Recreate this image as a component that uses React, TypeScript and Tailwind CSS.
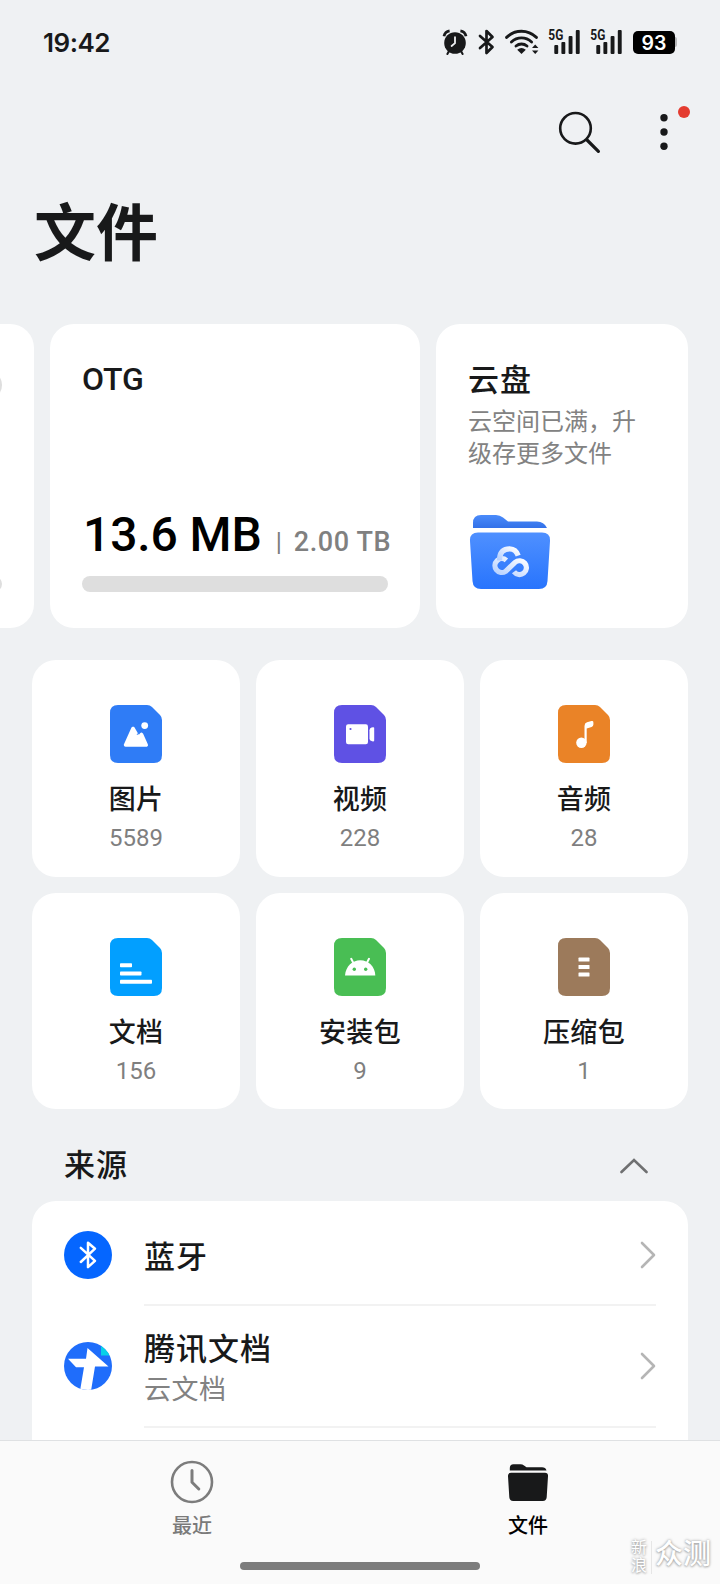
import React from 'react'
import { clsx } from 'clsx'

const FilePage = ({ color, children }: { color: string; children: React.ReactNode }) => (
  <svg width="52" height="58" viewBox="0 0 52 58" className="block">
    <path d="M8 0H37Q40 0 42 2L50 10Q52 12 52 15V50Q52 58 44 58H8Q0 58 0 50V8Q0 0 8 0Z" fill={color} />
    {children}
  </svg>
)

const categories = [
  {
    name: '图片',
    count: '5589',
    icon: (
      <FilePage color="#2f7cf6">
        <path d="M15.6 40L23 23.5L28.5 33L31.5 29.5L36.2 40Z" fill="#fff" stroke="#fff" strokeWidth="3.6" strokeLinejoin="round" />
        <path d="M27 30L28.8 27.3" stroke="#2f7cf6" strokeWidth="0.8" />
        <circle cx="34.7" cy="20.6" r="3.4" fill="#fff" />
      </FilePage>
    ),
  },
  {
    name: '视频',
    count: '228',
    icon: (
      <FilePage color="#5f51e4">
        <rect x="12" y="19.3" width="22" height="20" rx="2.2" fill="#fff" />
        <path d="M35.5 25.2Q35.5 23.2 37.5 22.6L39 22.2Q40.2 22 40.2 23V35.6Q40.2 36.6 39 36.4L37.5 36Q35.5 35.4 35.5 33.4Z" fill="#fff" />
        <circle cx="16.5" cy="24" r="1.1" fill="#5f51e4" />
      </FilePage>
    ),
  },
  {
    name: '音频',
    count: '28',
    icon: (
      <FilePage color="#ea8327">
        <circle cx="23.4" cy="37.8" r="5.2" fill="#fff" />
        <path d="M26.5 38V21Q26.5 18 29 17.2L33.5 16Q35.4 15.6 35.4 17.4V19.6Q35.4 21.4 33.6 22L28.7 23.6V38Z" fill="#fff" />
      </FilePage>
    ),
  },
  {
    name: '文档',
    count: '156',
    icon: (
      <FilePage color="#029fff">
        <rect x="10" y="25.3" width="12" height="4" rx="0.8" fill="#fff" />
        <rect x="10" y="33.5" width="21.5" height="4" rx="0.8" fill="#fff" />
        <rect x="10" y="41.7" width="32" height="4" rx="0.8" fill="#fff" />
      </FilePage>
    ),
  },
  {
    name: '安装包',
    count: '9',
    icon: (
      <FilePage color="#49be54">
        <path d="M11 37.5C11.6 28.6 18 22.2 26.3 22.2S41 28.6 41.3 37.5Z" fill="#fff" />
        <path d="M17.2 20.8L19.6 25.4M35 20.8L32.6 25.4" stroke="#fff" strokeWidth="2" strokeLinecap="round" />
        <circle cx="20.3" cy="31.2" r="1.7" fill="#49be54" />
        <circle cx="31.7" cy="31.2" r="1.7" fill="#49be54" />
      </FilePage>
    ),
  },
  {
    name: '压缩包',
    count: '1',
    icon: (
      <FilePage color="#9c7a5b">
        <rect x="20.5" y="19.6" width="11" height="4" rx="0.6" fill="#fff" />
        <rect x="20.5" y="27" width="11" height="4" rx="0.6" fill="#fff" />
        <rect x="20.5" y="34.5" width="11" height="4" rx="0.6" fill="#fff" />
      </FilePage>
    ),
  },
]

const Signal = () => (
  <svg width="33" height="34" viewBox="0 -4 33 34" className="block">
    <text x="0.3" y="11.4" fontSize="14" fontWeight="700" fontFamily="Roboto, sans-serif" textLength="15" lengthAdjust="spacingAndGlyphs" fill="#18191a">
      5G
    </text>
    <g fill="#18191a">
      <rect x="6.3" y="16" width="3.9" height="9" rx="1" />
      <rect x="13.4" y="13" width="3.9" height="12" rx="1" />
      <rect x="20.6" y="7" width="3.9" height="18" rx="1" />
      <rect x="27.8" y="1" width="3.9" height="24" rx="1" />
    </g>
  </svg>
)

const StatusBar = () => (
  <div className="flex h-[84px] items-center justify-between pl-[43px] pr-[43px]">
    <span className="pt-[2px] font-[Inter,sans-serif] text-[26px] font-semibold leading-none tracking-[-0.5px] text-[#18191a]">19:42</span>
    <div className="flex items-center">
      {/* Alarm */}
      <svg width="26" height="26" viewBox="0 0 26 26" className="mr-[10px] block">
        <circle cx="13" cy="14" r="10.8" fill="#18191a" />
        <path d="M2 7.2Q3 2.6 7.6 1.9M24 7.2Q23 2.6 18.4 1.9" stroke="#18191a" strokeWidth="2.8" fill="none" />
        <path d="M7 22L5.4 25M19 22L20.6 25" stroke="#18191a" strokeWidth="2" strokeLinecap="round" />
        <path d="M13 8.2V14.2L9.6 17" stroke="#eff1f3" strokeWidth="1.8" fill="none" strokeLinecap="round" />
      </svg>
      {/* Bluetooth */}
      <svg width="17" height="26" viewBox="0 0 17 26" className="mr-[10px] block">
        <path d="M2 7L14.5 18L8.5 24V2L14.5 8L2 19" stroke="#18191a" strokeWidth="2.7" fill="none" strokeLinejoin="round" strokeLinecap="round" />
      </svg>
      {/* Wi-Fi */}
      <svg width="34" height="26" viewBox="0 0 34 26" className="mr-[9px] block">
        <g fill="none" stroke="#18191a" strokeWidth="2.9" strokeLinecap="round">
          <path d="M1.6 8.4Q8 2.3 16.5 2.3T31.4 8.4" />
          <path d="M6.4 13Q10.8 8.9 16.5 8.9T26.6 13" />
          <path d="M11 17Q13.4 15 16.5 15T22 17" />
        </g>
        <path d="M12.2 20.8Q16.5 17.4 20.8 20.8L16.5 25Z" fill="#18191a" />
        <path d="M27 19L30.2 15.6L33.4 19ZM27 21.6L30.2 25L33.4 21.6Z" fill="#18191a" />
      </svg>
      <Signal />
      <div className="w-[9px]" />
      <Signal />
      <div className="ml-[10px] flex h-[23px] w-[42px] items-center justify-center rounded-[5px] bg-black pt-[2px] font-[Inter,sans-serif] text-[19.5px] font-semibold leading-[20px] text-white">
        93
      </div>
      <div className="h-[10px] w-[2px] rounded-r-full bg-[#b5b6b8]" />
    </div>
  </div>
)

const Toolbar = () => (
  <div className="flex h-[104px] justify-end pr-[29px] pt-[20px]">
    <svg width="44" height="44" viewBox="0 0 44 44" className="mr-[56px] mt-[6px] block">
      <circle cx="18.5" cy="18.3" r="15.3" fill="none" stroke="#18191a" strokeWidth="2.6" />
      <path d="M30 30L41.4 41.4" stroke="#18191a" strokeWidth="3.2" strokeLinecap="round" />
    </svg>
    <svg width="34" height="50" viewBox="0 0 34 50" className="block">
      <circle cx="7" cy="13.7" r="3.7" fill="#18191a" />
      <circle cx="7" cy="28" r="3.7" fill="#18191a" />
      <circle cx="7" cy="42.3" r="3.7" fill="#18191a" />
      <circle cx="27" cy="8" r="6" fill="#e43c30" />
    </svg>
  </div>
)

const CloudFolder = () => (
  <svg width="82" height="76" viewBox="0 0 82 76" className="block">
    <defs>
      <linearGradient id="tab" x1="0" y1="0" x2="0" y2="1">
        <stop offset="0" stopColor="#4a8bfb" />
        <stop offset="1" stopColor="#3371e8" />
      </linearGradient>
      <linearGradient id="body" x1="0" y1="0" x2="0" y2="1">
        <stop offset="0" stopColor="#4f90ff" />
        <stop offset="1" stopColor="#2874fd" />
      </linearGradient>
      <linearGradient id="mark" x1="1" y1="0" x2="0" y2="1">
        <stop offset="0" stopColor="#fff" />
        <stop offset="1" stopColor="#b4cfff" />
      </linearGradient>
    </defs>
    <path d="M4 14V9Q4 1 12 1H27Q31 1 34 3.5L39 7.5H68Q75 7.5 78 14Z" fill="url(#tab)" />
    <path d="M9 18.5H73Q81.5 18.5 81 27L78.5 67Q78 75 70 75H12Q4 75 3.5 67L1 27Q0.5 18.5 9 18.5Z" fill="url(#body)" />
    <g fill="none" stroke="url(#mark)" strokeWidth="5.2">
      <path d="M37.4 46.4A6.9 6.9 0 1 0 36.6 57.4L46 48.4A6.9 6.9 0 1 1 45 57.8" />
      <path d="M30.6 46.5V44Q31.4 35 40.6 34.8Q47 35 49.2 41.6" />
    </g>
  </svg>
)

const StorageCards = () => (
  <div className="flex h-[304px] gap-4 overflow-hidden">
    <div className="relative w-[34px] shrink-0 overflow-hidden rounded-r-[24px] bg-white">
      <div className="absolute left-[-28px] top-[46px] size-[30px] rounded-full bg-[#dedede]" />
      <div className="absolute left-[-28px] top-[252px] h-4 w-[30px] rounded-full bg-[#dedede]" />
    </div>
    <div className="flex w-[370px] shrink-0 flex-col rounded-[24px] bg-white px-8 pt-[36px] font-[Roboto,sans-serif]">
      <div className="text-[32px] font-medium leading-[38px] tracking-[-0.2px] text-[#18191a]">OTG</div>
      <div className="mt-[109px] flex h-[56px] items-baseline whitespace-nowrap leading-[56px]">
        <span className="pl-px text-[48px] font-medium tracking-[-0.1px] text-black">13.6 MB</span>
        <span className="ml-[14px] text-[25px] text-[#7b7b7b]">|</span>
        <span className="ml-[12px] text-[27px] font-medium tracking-[0.6px] text-[#808080]">2.00 TB</span>
      </div>
      <div className="mt-[13px] h-4 w-[306px] shrink-0 rounded-full bg-[#dedede]" />
    </div>
    <div className="w-[252px] shrink-0 rounded-[24px] bg-white px-8 pt-[35px]">
      <div className="text-[31px] font-medium leading-[38px] tracking-[1px] text-[#18191a]">云盘</div>
      <div className="mt-[7px] whitespace-nowrap text-[24px] font-normal leading-[32px] text-[#828282]">
        云空间已满，升
        <br />
        级存更多文件
      </div>
      <div className="ml-px mt-[46px]">
        <CloudFolder />
      </div>
    </div>
  </div>
)

const TencentDocs = () => (
  <svg width="48" height="48" viewBox="0 0 48 48" className="block">
    <defs>
      <clipPath id="round">
        <circle cx="24" cy="24" r="24" />
      </clipPath>
    </defs>
    <g clipPath="url(#round)">
      <rect width="48" height="48" fill="#1f6dfb" />
      <path d="M37 3L48 13.5H37Z" fill="#08d0e8" />
      <path d="M23.5 6L44.5 24.5H31L27 49H16L20 25.2H12L4 16.8H22Z" fill="#fff" />
    </g>
  </svg>
)

const ChevronRight = () => (
  <svg width="16" height="28" viewBox="0 0 16 28" className="block">
    <path d="M2 2L14 14L2 26" fill="none" stroke="#b5b5b5" strokeWidth="2.6" strokeLinecap="round" strokeLinejoin="round" />
  </svg>
)

const Sources = () => (
  <section className="mx-8">
    <div className="flex h-[92px] items-center justify-between pl-8 pr-[40px] pt-[18px]">
      <h2 className="-mt-[3px] text-[31px] font-medium leading-none tracking-[1px] text-[#18191a]">来源</h2>
      <svg width="28" height="16" viewBox="0 0 28 16" className="mt-[3px] block">
        <path d="M1.5 14L14 2L26.5 14" fill="none" stroke="#6f7071" strokeWidth="2.6" strokeLinecap="round" />
      </svg>
    </div>
    <div className="rounded-t-[24px] bg-white pl-8 pr-8">
      <div className="flex h-[105px]">
        <svg width="48" height="48" viewBox="0 0 48 48" className="mr-8 mt-[30px] block shrink-0">
          <circle cx="24" cy="24" r="24" fill="#0566ff" />
          <path d="M16.8 16.8L31 29.8L24 36.2V11.7L31 17.7L16.8 31" fill="none" stroke="#fff" strokeWidth="2.5" strokeLinejoin="round" strokeLinecap="round" />
        </svg>
        <div className="flex grow items-center justify-between border-b-2 border-[#f2f2f2] pt-[4px]">
          <span className="text-[31px] font-medium leading-none tracking-[1px] text-[#18191a]">蓝牙</span>
          <ChevronRight />
        </div>
      </div>
      <div className="flex h-[134px]">
        <div className="mr-8 mt-[36px] shrink-0">
          <TencentDocs />
        </div>
        <div className="flex h-[122px] grow items-center justify-between border-b-2 border-[#f2f2f2]">
          <div className="mt-[3px]">
            <div className="text-[31px] font-medium leading-[40px] tracking-[1px] text-[#18191a]">腾讯文档</div>
            <div className="text-[27px] font-normal leading-[42px] tracking-[0.5px] text-[#828282]">云文档</div>
          </div>
          <ChevronRight />
        </div>
      </div>
    </div>
  </section>
)

const tabs = [
  {
    label: '最近',
    active: false,
    icon: (
      <svg width="44" height="44" viewBox="0 0 44 44" className="block">
        <circle cx="22" cy="22" r="20" fill="none" stroke="#7c7c7c" strokeWidth="2.6" />
        <path d="M22 10.5V22.2L28.8 29" fill="none" stroke="#7c7c7c" strokeWidth="3" strokeLinecap="round" strokeLinejoin="round" />
      </svg>
    ),
  },
  {
    label: '文件',
    active: true,
    icon: (
      <svg width="44" height="44" viewBox="0 0 44 44" className="block">
        <path d="M3.8 10.5V8Q3.8 4.2 7.5 4.2H14.5Q16.5 4.2 18 5.4L20.5 7.2H36Q39.6 7.2 40.5 10.5Z" fill="#18191a" />
        <path d="M5 12.8H39Q42.3 12.8 42 16.3L40.7 37.3Q40.4 41 36.8 41H7.2Q3.6 41 3.3 37.3L2 16.3Q1.7 12.8 5 12.8Z" fill="#18191a" />
      </svg>
    ),
  },
]

const TabBar = () => (
  <nav className="relative flex h-[144px] flex-col items-center justify-between border-t border-[#dfe1e3] bg-[#fafafa] pb-[14px] pt-[19px]">
    <div className="flex w-full px-6">
      {tabs.map((tab) => (
        <div key={tab.label} className="flex w-1/2 flex-col items-center gap-[10px]">
          {tab.icon}
          <span className={clsx('text-[20px] font-medium leading-[22px]', tab.active ? 'text-black' : 'text-[#7a7a7a]')}>
            {tab.label}
          </span>
        </div>
      ))}
    </div>
    <div className="h-2 w-60 rounded-full bg-[#7c7c7c]" />

    {/* Watermark */}
    <div className="absolute bottom-[9px] right-[9px] flex items-center text-white [text-shadow:0_0_3px_#999,0_1px_2px_#bbb]">
      <div className="text-[16px] leading-[18px] tracking-[2px] [writing-mode:vertical-rl]">新浪</div>
      <div className="mx-[3px] h-[33px] w-px bg-[#e6e6e6]" />
      <div className="-mt-[10px] text-[28px] font-medium leading-[34px]">众测</div>
    </div>
  </nav>
)

const App = () => {
  return (
    <div className="flex h-[1584px] w-[720px] flex-col overflow-hidden bg-[#eff1f3] font-['Noto_Sans_CJK_SC',sans-serif]">
      <StatusBar />
      <Toolbar />
      <h1 className="h-[136px] pl-[34px] text-[62px] font-bold leading-[83px] text-[#18191a]">文件</h1>
      <StorageCards />

      {/* Categories */}
      <div className="mx-8 mt-8 grid shrink-0 grid-cols-3 gap-4">
        {categories.map((item) => (
          <div key={item.name} className="flex h-[216.5px] flex-col items-center rounded-[24px] bg-white pt-[45px]">
            {item.icon}
            <div className="mt-[16px] text-[27px] font-medium leading-[38px] tracking-[0.3px] text-[#18191a]">{item.name}</div>
            <div className="mt-[7px] font-[Roboto,sans-serif] text-[24px] leading-[28px] text-[#7f7f7f]">{item.count}</div>
          </div>
        ))}
      </div>

      <div className="min-h-0 grow overflow-hidden">
        <Sources />
      </div>
      <TabBar />
    </div>
  )
}

export default App
